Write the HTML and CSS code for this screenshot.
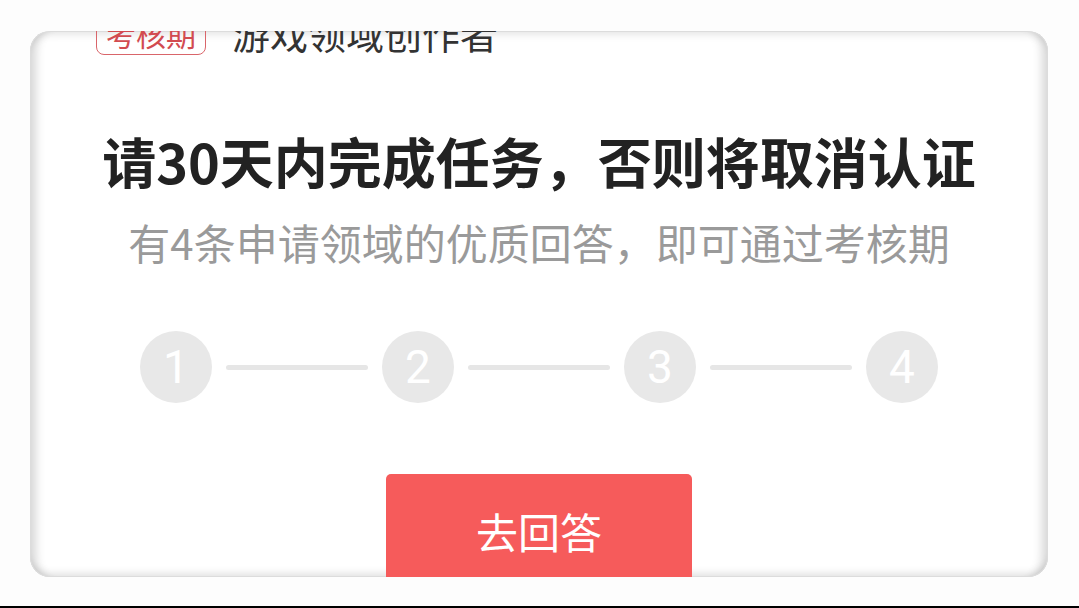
FILE: index.html
```html
<!DOCTYPE html>
<html lang="zh-CN">
<head>
<meta charset="utf-8">
<title>考核期</title>
<link rel="stylesheet" href="styles.css">
</head>
<body>
<div class="page">
  <div class="card">
    <div class="card-inner">
      <div class="header">
        <span class="badge">考核期</span>
        <span class="role">游戏领域创作者</span>
      </div>
      <h1 class="title">请30天内完成任务，否则将取消认证</h1>
      <p class="subtitle">有4条申请领域的优质回答，即可通过考核期</p>
      <div class="steps">
        <div class="step">1</div>
        <div class="line"></div>
        <div class="step">2</div>
        <div class="line"></div>
        <div class="step">3</div>
        <div class="line"></div>
        <div class="step">4</div>
      </div>
      <div class="actions">
        <button class="btn">去回答</button>
      </div>
    </div>
  </div>
  <div class="bottom-bar"></div>
</div>
</body>
</html>
```

FILE: styles.css
```css
* { box-sizing: border-box; }
html, body {
  margin: 0;
  padding: 0;
  background: #fdfdfd;
}
body {
  font-family: "Noto Sans CJK SC", "Noto Sans", sans-serif;
  width: 1079px;
  height: 608px;
  overflow: hidden;
}
.page {
  display: flex;
  flex-direction: column;
  height: 608px;
  padding-top: 31px;
}
.card {
  margin-left: 30px;
  width: 1018px;
  height: 546px;
  border-radius: 20px;
  background: #ffffff;
  overflow: hidden;
  box-shadow:
    inset 0 0 0 1px #dcdcdc,
    inset 16px 0 10px -10px rgba(0,0,0,0.16),
    inset -16px 0 10px -10px rgba(0,0,0,0.16),
    inset 0 10px 8px -7px rgba(0,0,0,0.12),
    inset 0 -10px 8px -7px rgba(0,0,0,0.14);
}
.card-inner {
  display: flex;
  flex-direction: column;
  align-items: center;
  margin-top: -20px;
}
.header {
  align-self: flex-start;
  display: flex;
  align-items: center;
  height: 44px;
  padding-left: 66px;
  gap: 26px;
}
.badge {
  display: flex;
  align-items: center;
  justify-content: center;
  width: 110px;
  height: 44px;
  border: 1.5px solid #d9656a;
  border-radius: 8px;
  color: #d24b50;
  font-size: 30px;
  line-height: 1;
}
.role {
  color: #333333;
  font-size: 38px;
  line-height: 44px;
}
.title {
  margin: 76px 0 0 0;
  font-size: 54px;
  line-height: 60px;
  font-weight: 700;
  color: #222222;
  letter-spacing: 0;
}
.subtitle {
  margin: 26px 0 0 0;
  font-size: 42px;
  line-height: 50px;
  color: #9a9a9a;
}
.steps {
  margin-top: 64px;
  display: flex;
  align-items: center;
  gap: 14px;
}
.step {
  width: 72px;
  height: 72px;
  border-radius: 50%;
  background: #e8e8e8;
  color: #ffffff;
  font-family: Roboto, "Noto Sans", sans-serif;
  font-weight: 400;
  font-size: 46px;
  line-height: 72px;
  text-align: center;
}
.line {
  width: 142px;
  height: 5px;
  border-radius: 3px;
  background: #e6e6e6;
}
.actions {
  margin-top: 71px;
}
.btn {
  width: 306px;
  height: 114px;
  border: none;
  border-radius: 5px;
  background: #f65b5b;
  color: #ffffff;
  font-family: "Noto Sans CJK SC", "Noto Sans", sans-serif;
  font-size: 42px;
  line-height: 1;
  padding: 0;
}
.bottom-bar {
  margin-top: auto;
  height: 2px;
  background: #000000;
}
```
